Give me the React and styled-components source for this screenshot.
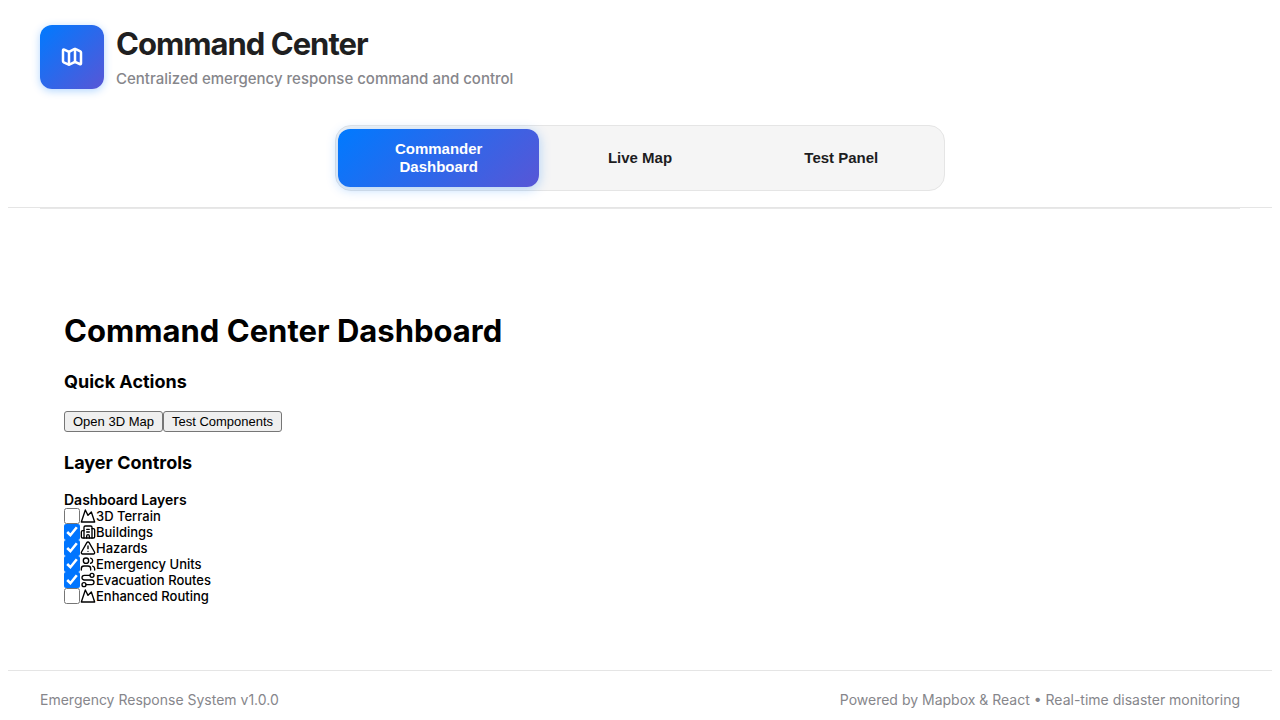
import React from 'react';
import styled, { createGlobalStyle, css } from 'styled-components';
import { Mountain, Building2, TriangleAlert, Users, Route } from 'lucide-react';

const GlobalStyle = createGlobalStyle`
  body {
    margin: 0 8px;
    background: #ffffff;
    color: #000000;
    font-family: Inter, 'Liberation Sans', sans-serif;
  }
`;

const Page = styled.div`
  display: flex;
  flex-direction: column;
  min-height: 100vh;
`;

const Header = styled.header`
  padding: 25px 32px 16px;
  border-bottom: 1px solid #e5e5e5;
`;

const Brand = styled.div`
  display: flex;
  align-items: flex-start;
  gap: 12px;
`;

const Logo = styled.div`
  display: flex;
  align-items: center;
  justify-content: center;
  width: 64px;
  height: 64px;
  border-radius: 12px;
  color: #ffffff;
  background: linear-gradient(135deg, #007aff, #5856d6);
  box-shadow: 0 2px 8px rgba(0, 122, 255, 0.3);
`;

const Title = styled.h1`
  margin: 0;
  color: #1f1f21;
  font-size: 31px;
  line-height: 38px;
  font-weight: 700;
  letter-spacing: -1px;
`;

const Subtitle = styled.p`
  margin: 4px 0 0;
  color: #86868b;
  font-size: 15px;
  line-height: 24px;
  font-weight: 500;
`;

const Tabs = styled.nav`
  display: flex;
  box-sizing: border-box;
  max-width: 610px;
  margin: 34px auto 0;
  padding: 3px 2px;
  border: 1px solid #e5e5e5;
  border-radius: 16px;
  background: #f5f5f5;
`;

const Tab = styled.button`
  flex: 1;
  min-height: 58px;
  padding: 10px 40px;
  border: 0;
  border-radius: 12px;
  background: transparent;
  color: #1d1d1f;
  font: 700 15px/18px 'Liberation Sans', Arial, sans-serif;
  ${({ $active }) => $active && css`
    color: #ffffff;
    background: linear-gradient(135deg, #007aff, #5856d6);
    box-shadow: 0 2px 12px rgba(0, 122, 255, 0.3);
  `}
`;

const Divider = styled.div`
  height: 1px;
  margin: 0 32px;
  background: #e8e8e8;
`;

const Main = styled.main`
  flex: 1;
  padding: 103px 56px 66px;
`;

const PageHeading = styled.h2`
  margin: 0 0 21px;
  font-size: 31px;
  line-height: 38px;
  font-weight: 700;
`;

const SectionHeading = styled.h3`
  margin: 0 0 18px;
  font-size: 18px;
  line-height: 22px;
  font-weight: 700;
`;

const Actions = styled.div`
  display: flex;
  margin-bottom: 20px;
`;

const ActionButton = styled.button`
  height: 21px;
  padding: 1px 8px;
  border: 1px solid #767676;
  border-radius: 3px;
  background: #efefef;
  color: #000000;
  font: 13px/15px 'Liberation Sans', Arial, sans-serif;
`;

const Layers = styled.fieldset`
  margin: 0;
  padding: 0;
  border: 0;
`;

const Legend = styled.legend`
  padding: 0;
  font-size: 14px;
  line-height: 16px;
  font-weight: 600;
`;

const LayerLabel = styled.label`
  display: flex;
  align-items: center;
  height: 16px;
  font-size: 13px;
  line-height: 16px;
  font-weight: 500;
`;

const Checkbox = styled.input`
  width: 16px;
  height: 16px;
  margin: 0;
`;

const Footer = styled.footer`
  display: flex;
  justify-content: space-between;
  padding: 20px 32px;
  border-top: 1px solid #e5e5e5;
  color: #86868b;
  font-size: 14px;
  line-height: 18px;
`;

const FoldedMapIcon = () => (
  <svg
    width="24"
    height="24"
    viewBox="0 0 24 24"
    fill="none"
    stroke="currentColor"
    strokeWidth="2.5"
    strokeLinecap="round"
    strokeLinejoin="round"
    aria-hidden="true"
  >
    <path d="M4.3 4.6 9 6.8 14.2 4.2Q15 3.8 15.8 4.2L20.3 6.3Q21 6.7 21 7.5V18.2Q21 19.6 19.7 19L15 16.9 9.8 19.4Q9 19.8 8.2 19.4L3.7 17.3Q3 17 3 16.2V5.4Q3 4 4.3 4.6Z" />
    <path d="M9 6.8V19.6M15 4V16.9" />
  </svg>
);

const layers = [
  { name: '3D Terrain', Icon: Mountain, on: false },
  { name: 'Buildings', Icon: Building2, on: true },
  { name: 'Hazards', Icon: TriangleAlert, on: true },
  { name: 'Emergency Units', Icon: Users, on: true },
  { name: 'Evacuation Routes', Icon: Route, on: true },
  { name: 'Enhanced Routing', Icon: Mountain, on: false },
];

const tabs = ['Commander Dashboard', 'Live Map', 'Test Panel'];

export default function App() {
  const [active, setActive] = React.useState(tabs[0]);
  return (
    <>
      <GlobalStyle />
      <Page>
        <Header>
          <Brand>
            <Logo><FoldedMapIcon /></Logo>
            <div>
              <Title>Command Center</Title>
              <Subtitle>Centralized emergency response command and control</Subtitle>
            </div>
          </Brand>
          <Tabs>
            {tabs.map((tab) => (
              <Tab key={tab} type="button" $active={tab === active} onClick={() => setActive(tab)}>{tab}</Tab>
            ))}
          </Tabs>
        </Header>
        <Divider />
        <Main>
          <PageHeading>Command Center Dashboard</PageHeading>
          <SectionHeading>Quick Actions</SectionHeading>
          <Actions>
            <ActionButton type="button">Open 3D Map</ActionButton>
            <ActionButton type="button">Test Components</ActionButton>
          </Actions>
          <SectionHeading>Layer Controls</SectionHeading>
          <Layers>
            <Legend>Dashboard Layers</Legend>
            {layers.map(({ name, Icon, on }) => (
              <LayerLabel key={name}>
                <Checkbox type="checkbox" defaultChecked={on} />
                <Icon size={16} />
                {name}
              </LayerLabel>
            ))}
          </Layers>
        </Main>
        <Footer>
          <span>Emergency Response System v1.0.0</span>
          <span>Powered by Mapbox &amp; React • Real-time disaster monitoring</span>
        </Footer>
      </Page>
    </>
  );
}
